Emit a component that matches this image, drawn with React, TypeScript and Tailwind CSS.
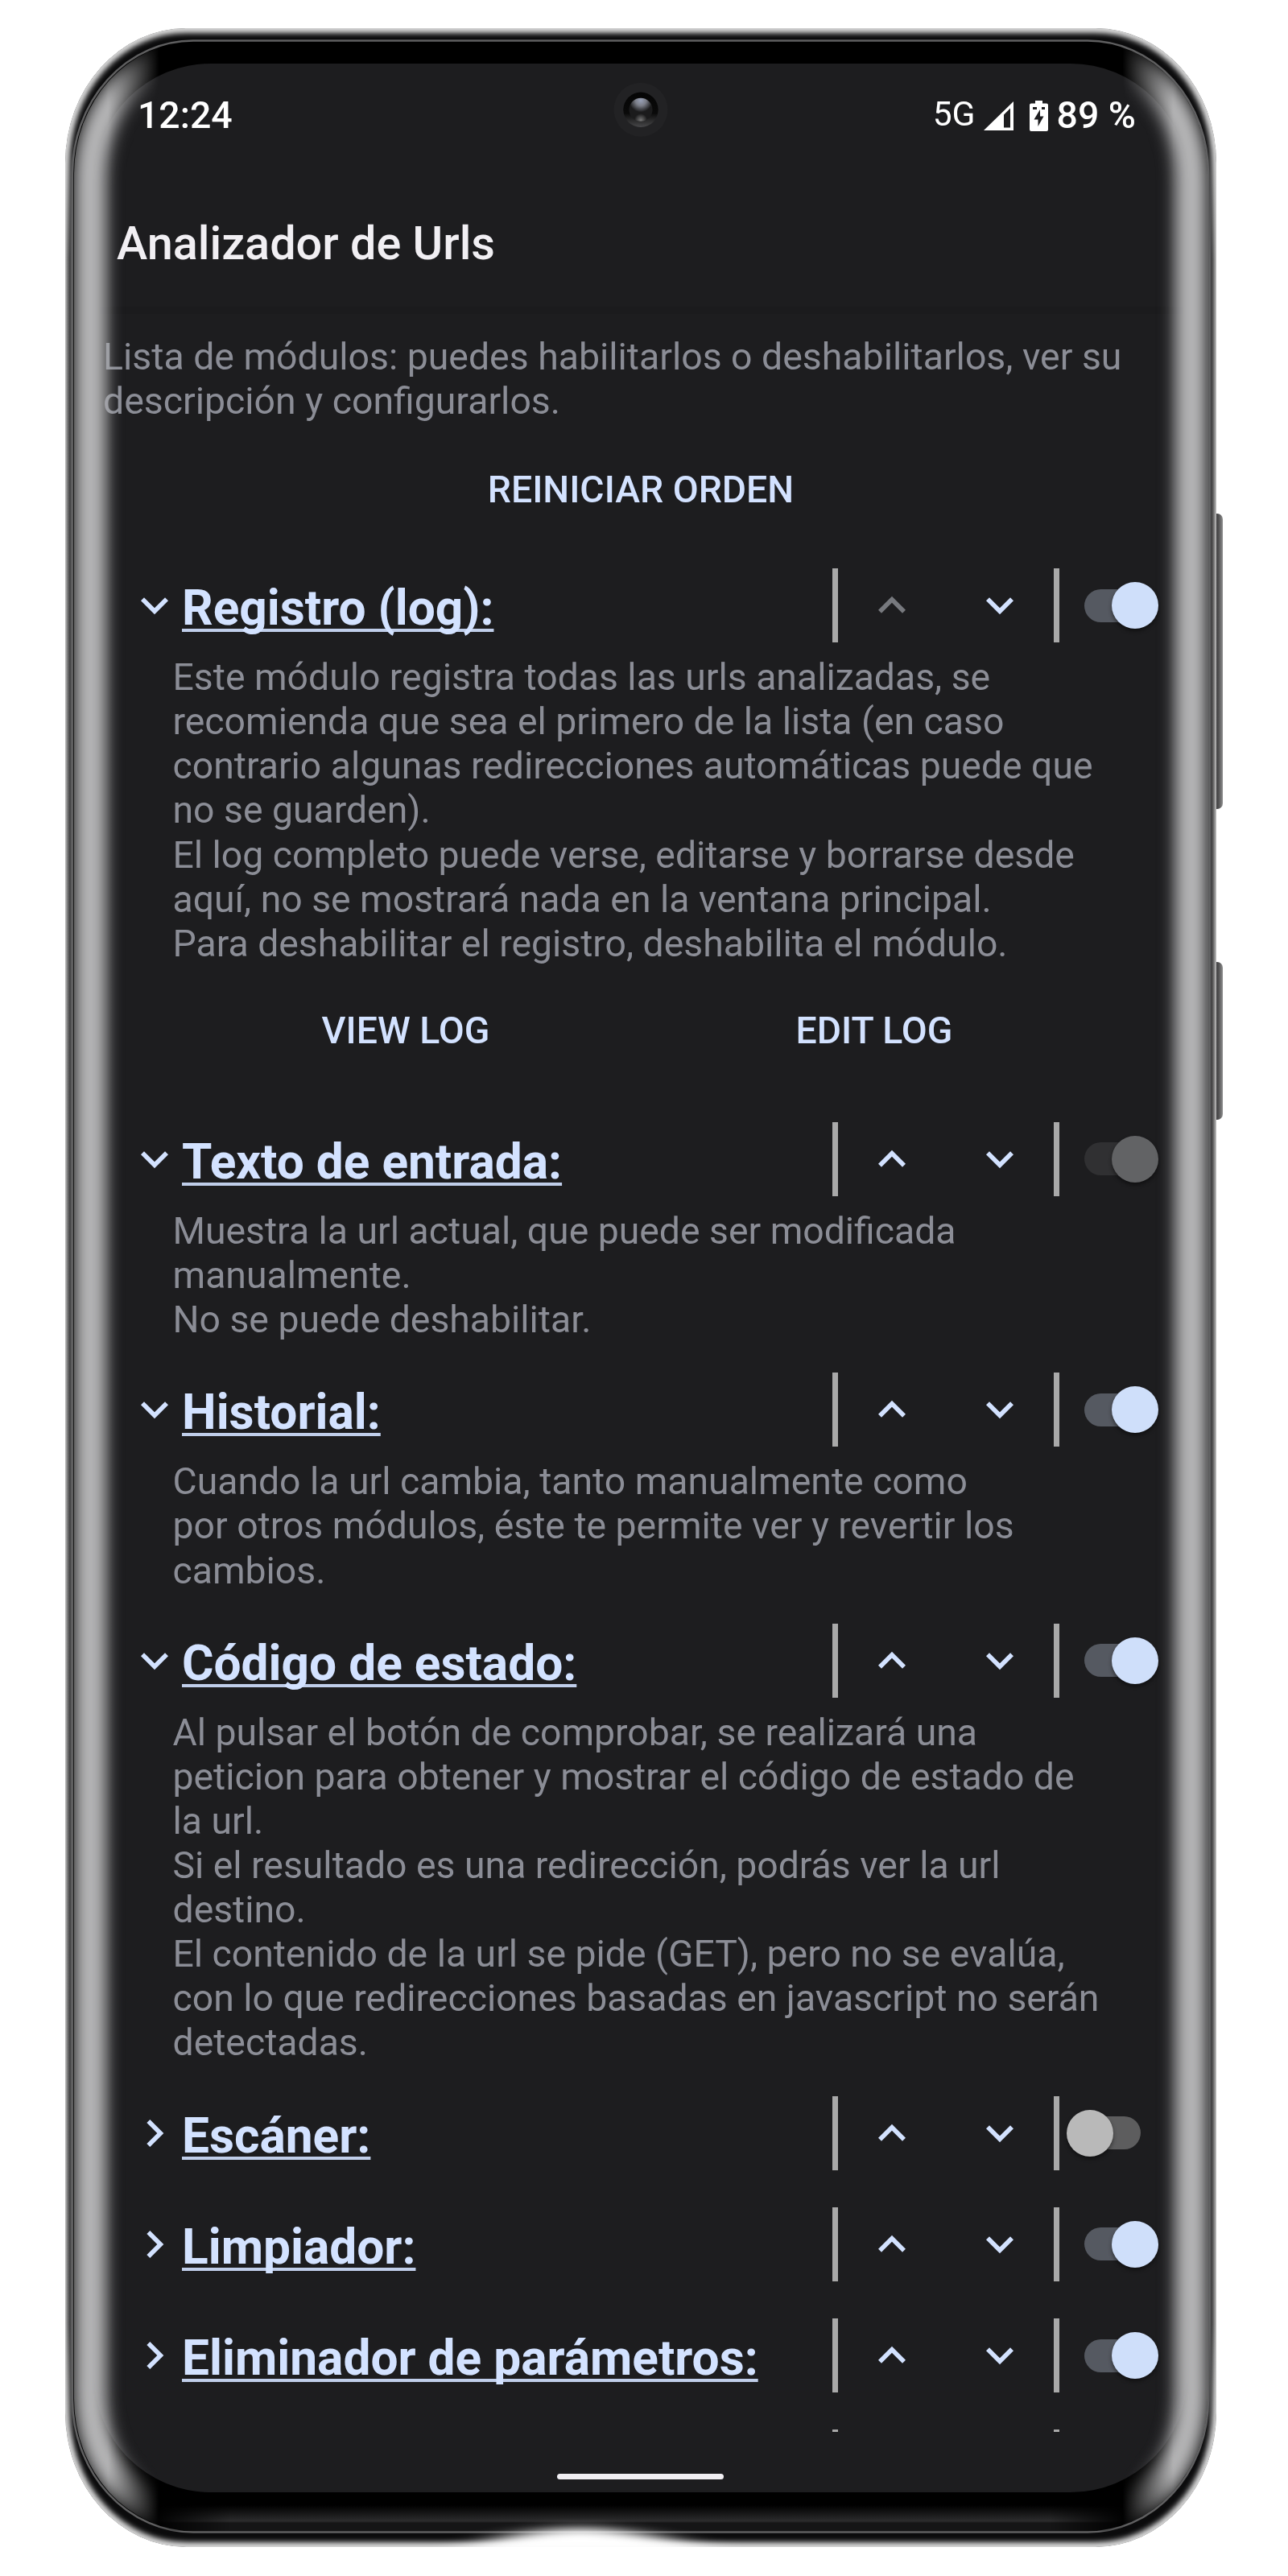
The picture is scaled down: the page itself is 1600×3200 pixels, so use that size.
import type { ReactNode } from "react";

type Module = {
  title: string;
  on: boolean;
  locked?: boolean;
  first?: boolean;
  lines?: string[];
  actions?: string[];
};

const modules: Module[] = [
  {
    title: "Registro (log):",
    on: true,
    first: true,
    lines: [
      "Este módulo registra todas las urls analizadas, se",
      "recomienda que sea el primero de la lista (en caso",
      "contrario algunas redirecciones automáticas puede que",
      "no se guarden).",
      "El log completo puede verse, editarse y borrarse desde",
      "aquí, no se mostrará nada en la ventana principal.",
      "Para deshabilitar el registro, deshabilita el módulo.",
    ],
    actions: ["VIEW LOG", "EDIT LOG"],
  },
  {
    title: "Texto de entrada:",
    on: true,
    locked: true,
    lines: ["Muestra la url actual, que puede ser modificada", "manualmente.", "No se puede deshabilitar."],
  },
  {
    title: "Historial:",
    on: true,
    lines: [
      "Cuando la url cambia, tanto manualmente como",
      "por otros módulos, éste te permite ver y revertir los",
      "cambios.",
    ],
  },
  {
    title: "Código de estado:",
    on: true,
    lines: [
      "Al pulsar el botón de comprobar, se realizará una",
      "peticion para obtener y mostrar el código de estado de",
      "la url.",
      "Si el resultado es una redirección, podrás ver la url",
      "destino.",
      "El contenido de la url se pide (GET), pero no se evalúa,",
      "con lo que redirecciones basadas en javascript no serán",
      "detectadas.",
    ],
  },
  { title: "Escáner:", on: false },
  { title: "Limpiador:", on: true },
  { title: "Eliminador de parámetros:", on: true },
];

const DOWN = "M16.59 8.59 12 13.17 7.41 8.59 6 10l6 6 6-6z";
const UP = "m12 8-6 6 1.41 1.41L12 10.83l4.59 4.58L18 14z";
const RIGHT = "M10 6 8.59 7.41 13.17 12l-4.58 4.59L10 18l6-6z";

function Icon({ d, className = "" }: { d: string; className?: string }) {
  return (
    <svg viewBox="0 0 24 24" className={`size-[68px] shrink-0 fill-current ${className}`}>
      <path d={d} />
    </svg>
  );
}

function Divider() {
  return <div className="h-[92px] w-[6.5px] shrink-0 bg-[#a9a9a9]" />;
}

function Switch({ on, locked }: { on: boolean; locked?: boolean }) {
  const track = locked ? "bg-[#303032]" : on ? "bg-[#555961]" : "bg-[#5d5d5e]";
  const knob = locked ? "bg-[#626365]" : on ? "bg-[#cfdffa]" : "bg-[#b9b9b9]";
  return (
    <button className={`relative ml-[31.5px] h-[41px] w-[70px] shrink-0 rounded-full ${track}`}>
      <span
        className={`absolute top-[-8.5px] size-[58px] rounded-full shadow-[0_3px_5px_rgba(0,0,0,0.45)] ${knob} ${
          on ? "left-[34px]" : "left-[-22px]"
        }`}
      />
    </button>
  );
}

function TextLines({ lines, className }: { lines: string[]; className: string }) {
  return (
    <div className={`leading-[55.1px] whitespace-nowrap text-[#8b8d96] ${className}`}>
      {lines.map((l) => (
        <div key={l}>{l}</div>
      ))}
    </div>
  );
}

function ModuleItem({ m }: { m: Module }) {
  return (
    <section className={m.lines ? (m.actions ? "mb-[33px]" : "mb-[38.2px]") : "mb-[46.2px]"}>
      <div className="flex h-[92px] items-center pl-[158px] text-[#d3e2ff]">
        <Icon d={m.lines ? DOWN : RIGHT} />
        <div className="w-[808px] pt-[8px] text-[60.4px] leading-[70px] font-bold whitespace-nowrap underline decoration-[#c0ceea] decoration-[3.5px] underline-offset-[4.5px] [text-decoration-skip-ink:none]">
          {m.title}
        </div>
        <Divider />
        <div className="flex w-[268.5px] justify-around">
          <Icon d={UP} className={m.first ? "text-[#77797e]" : ""} />
          <Icon d={DOWN} />
        </div>
        <Divider />
        <Switch on={m.on} locked={m.locked} />
      </div>
      {m.lines && <TextLines lines={m.lines} className="pt-[16px] pl-[214.5px] text-[46.33px]" />}
      {m.actions && (
        <div className="ml-[213px] grid h-[161px] w-[1164px] grid-cols-2 place-items-center pt-[1px]">
          {m.actions.map((a) => (
            <TextButton key={a}>{a}</TextButton>
          ))}
        </div>
      )}
    </section>
  );
}

function TextButton({ children }: { children: ReactNode }) {
  return <button className="text-[46.4px] leading-[55px] font-medium text-[#d3e2ff]">{children}</button>;
}

/* Rim, glass edge and side keys of the handset. */
function Handset() {
  const outer = { x: 81, y: 35, width: 1430, height: 3129, rx: 150, ry: 167 };
  const glass = { x: 90, y: 50.5, width: 1411, height: 3095, rx: 150, ry: 165 };
  return (
    <svg viewBox="0 0 1600 3200" className="absolute inset-0 size-full">
      <defs>
        <linearGradient id="key" x1="0" x2="1">
          <stop offset="0" stopColor="#2b2b2b" />
          <stop offset="0.7" stopColor="#4c4c4d" />
          <stop offset="1" stopColor="#8e8e8e" />
        </linearGradient>
        <linearGradient id="rimL" x1="0" x2="1">
          <stop offset="0" stopColor="#c4c4c4" />
          <stop offset="0.3" stopColor="#707070" />
          <stop offset="0.55" stopColor="#3c3c3d" />
          <stop offset="0.75" stopColor="#6a6b6d" />
          <stop offset="0.9" stopColor="#3a3a3a" />
          <stop offset="1" stopColor="#0a0a0a" />
        </linearGradient>
        <linearGradient id="fadeY" x2="0" y2="1">
          <stop offset="0" stopColor="#fff" stopOpacity="0" />
          <stop offset="0.05" stopColor="#fff" />
          <stop offset="0.95" stopColor="#fff" />
          <stop offset="1" stopColor="#fff" stopOpacity="0" />
        </linearGradient>
        <mask id="sides">
          <rect x="70" y="180" width="1460" height="2850" fill="url(#fadeY)" />
        </mask>
        <linearGradient id="fadeX" x1="0" x2="1">
          <stop offset="0" stopColor="#fff" stopOpacity="0" />
          <stop offset="0.08" stopColor="#fff" />
          <stop offset="0.92" stopColor="#fff" />
          <stop offset="1" stopColor="#fff" stopOpacity="0" />
        </linearGradient>
        <mask id="lipMask">
          <rect x="190" y="3100" width="1210" height="50" fill="url(#fadeX)" />
        </mask>
        <linearGradient id="lip" x2="0" y2="1">
          <stop offset="0" stopColor="#000" />
          <stop offset="0.9" stopColor="#2c2c2d" />
          <stop offset="1" stopColor="#161617" />
        </linearGradient>
        <clipPath id="outerClip">
          <rect {...outer} />
        </clipPath>
        <filter id="b3" x="-5%" y="-5%" width="110%" height="110%">
          <feGaussianBlur stdDeviation="3.2" />
        </filter>
        <filter id="b12" x="-50%" y="-100%" width="200%" height="300%">
          <feGaussianBlur stdDeviation="22 6" />
        </filter>
      </defs>
      <rect x="1500" y="638" width="19" height="367" rx="7" fill="url(#key)" />
      <rect x="1500" y="1195" width="19" height="196" rx="7" fill="url(#key)" />
      <g clipPath="url(#outerClip)">
        <rect {...outer} fill="#0b0b0c" />
        <rect {...outer} fill="none" stroke="#dadada" strokeWidth="12" filter="url(#b3)" />
        <g mask="url(#sides)">
          <rect x="81" y="180" width="11" height="2850" fill="url(#rimL)" />
          <rect x="1500" y="180" width="11" height="2850" fill="url(#rimL)" transform="matrix(-1 0 0 1 3011 0)" />
        </g>
      </g>
      <rect {...glass} fill="#000" stroke="#5f5f60" strokeWidth="2.5" />
      <g mask="url(#lipMask)">
        <rect x="190" y="3112" width="1210" height="22" fill="url(#lip)" />
        <rect x="190" y="3134" width="1210" height="10" fill="#151516" />
      </g>
      <path d="M560 3172 Q640 3142 720 3140 Q800 3142 900 3172Z" fill="#fff" filter="url(#b12)" />
      <path d="M540 3180V3164H920V3180Z" fill="#fff" />
    </svg>
  );
}

/* Reflection running down both curved glass edges. */
function EdgeGlow() {
  return (
    <svg viewBox="0 0 1600 3200" className="pointer-events-none absolute inset-0 size-full">
      <defs>
        <clipPath id="glassClip">
          <rect x="92" y="52" width="1408" height="3092" rx="149" ry="164" />
        </clipPath>
        <filter id="glow" x="-10%" y="-2%" width="120%" height="104%">
          <feGaussianBlur stdDeviation="10" />
        </filter>
        <linearGradient id="fadeL" gradientUnits="userSpaceOnUse" x1="92" x2="1500">
          <stop offset="0" stopColor="#fff" />
          <stop offset="0.03" stopColor="#fff" />
          <stop offset="0.075" stopColor="#fff" stopOpacity="0" />
          <stop offset="0.925" stopColor="#fff" stopOpacity="0" />
          <stop offset="0.97" stopColor="#fff" />
          <stop offset="1" stopColor="#fff" />
        </linearGradient>
        <mask id="glowMask">
          <rect width="1600" height="3200" fill="url(#fadeL)" />
        </mask>
      </defs>
      <g clipPath="url(#glassClip)">
        <g mask="url(#glowMask)">
          <g filter="url(#glow)" fill="none" stroke="#b6b6b7" strokeWidth="41">
            <path d="M262 66C160 72 112 140 112 225V2970C112 3060 160 3122 262 3130" />
            <path d="M1330 66C1432 72 1480 140 1480 225V2970C1480 3060 1432 3122 1330 3130" />
          </g>
        </g>
      </g>
    </svg>
  );
}

function Camera() {
  return (
    <svg viewBox="0 0 70 70" className="absolute top-[101px] left-[761px] size-[70px]">
      <defs>
        <linearGradient id="ring" x2="0" y2="1">
          <stop offset="0" stopColor="#050505" />
          <stop offset="0.6" stopColor="#0a0a0a" />
          <stop offset="1" stopColor="#48484a" />
        </linearGradient>
        <radialGradient id="lensTop" cx="0.5" cy="0.1" r="0.5">
          <stop offset="0" stopColor="#98a0b6" />
          <stop offset="0.45" stopColor="#7b7e88" />
          <stop offset="1" stopColor="#1b1b1c" />
        </radialGradient>
        <radialGradient id="lensLow" cx="0.5" cy="0.95" r="0.28">
          <stop offset="0" stopColor="#777" />
          <stop offset="1" stopColor="#777" stopOpacity="0" />
        </radialGradient>
      </defs>
      <circle cx="35" cy="35.3" r="33.5" fill="#222224" />
      <circle cx="35" cy="35.3" r="21.7" fill="url(#ring)" />
      <circle cx="35" cy="35.3" r="14.5" fill="url(#lensTop)" />
      <circle cx="35" cy="35.3" r="14.5" fill="url(#lensLow)" />
    </svg>
  );
}

function StatusBar() {
  return (
    <header className="flex h-[129px] items-center pr-[189px] pl-[171px] text-[46.4px] leading-none font-medium text-white">
      <span>12:24</span>
      <span className="ml-auto pb-[2px] text-[42.5px] font-normal">5G</span>
      <svg viewBox="0 0 37 36" className="ml-[10px] h-[36px] w-[37px]">
        <path d="M0 36 37 0V36Z M33 8.5 25 16.5V32.5H33Z" fill="#fff" fillRule="evenodd" />
      </svg>
      <svg viewBox="0 0 23 38" className="ml-[20px] h-[38px] w-[23px]">
        <path
          d="M7 0H16V3.5H21Q23 3.5 23 5.5V36Q23 38 21 38H2Q0 38 0 36V5.500Q0 3.500 2 3.500H7Z M13 11 5.500 23.500H10.500V32L17.500 19.500H13Z M4 8V11H9V8Z M15 8V11H19V8Z"
          fill="#fff"
          fillRule="evenodd"
        />
      </svg>
      <span className="ml-[11px]">89 %</span>
    </header>
  );
}

export default function App() {
  return (
    <div className="relative h-[3200px] w-[1600px] overflow-hidden bg-white font-['Roboto',sans-serif]">
      <Handset />
      <div className="absolute top-[79px] left-[117px] h-[3017px] w-[1358px] rounded-[145px] bg-[#1d1d1f]" />
      <div className="relative flex flex-col pt-[79px]">
        <StatusBar />
        <div className="flex h-[190px] items-center pl-[145px]">
          <h1 className="text-[57.6px] leading-[68px] font-medium text-[#f1eff3]">Analizador de Urls</h1>
        </div>
        <div className="-mt-[17px] mr-[125px] mb-[8px] ml-[117px] h-[9px] bg-[#1b1b1d]" />
        <TextLines
          lines={["Lista de módulos: puedes habilitarlos o deshabilitarlos, ver su", "descripción y configurarlos."]}
          className="pt-[18px] pl-[128px] text-[46.4px]"
        />
        <div className="ml-[116px] flex h-[164px] w-[1360px] items-center justify-center">
          <TextButton>REINICIAR ORDEN</TextButton>
        </div>
        <main className="mt-[16px] h-[2315px] overflow-hidden">
          {modules.map((m) => (
            <ModuleItem key={m.title} m={m} />
          ))}
          <div className="flex gap-[268.5px] pl-[1034px]">
            <Divider />
            <Divider />
          </div>
        </main>
        <div className="mt-[52px] ml-[692px] h-[7px] w-[207px] rounded-full bg-[#f1eff3]" />
      </div>
      <Camera />
      <EdgeGlow />
    </div>
  );
}
